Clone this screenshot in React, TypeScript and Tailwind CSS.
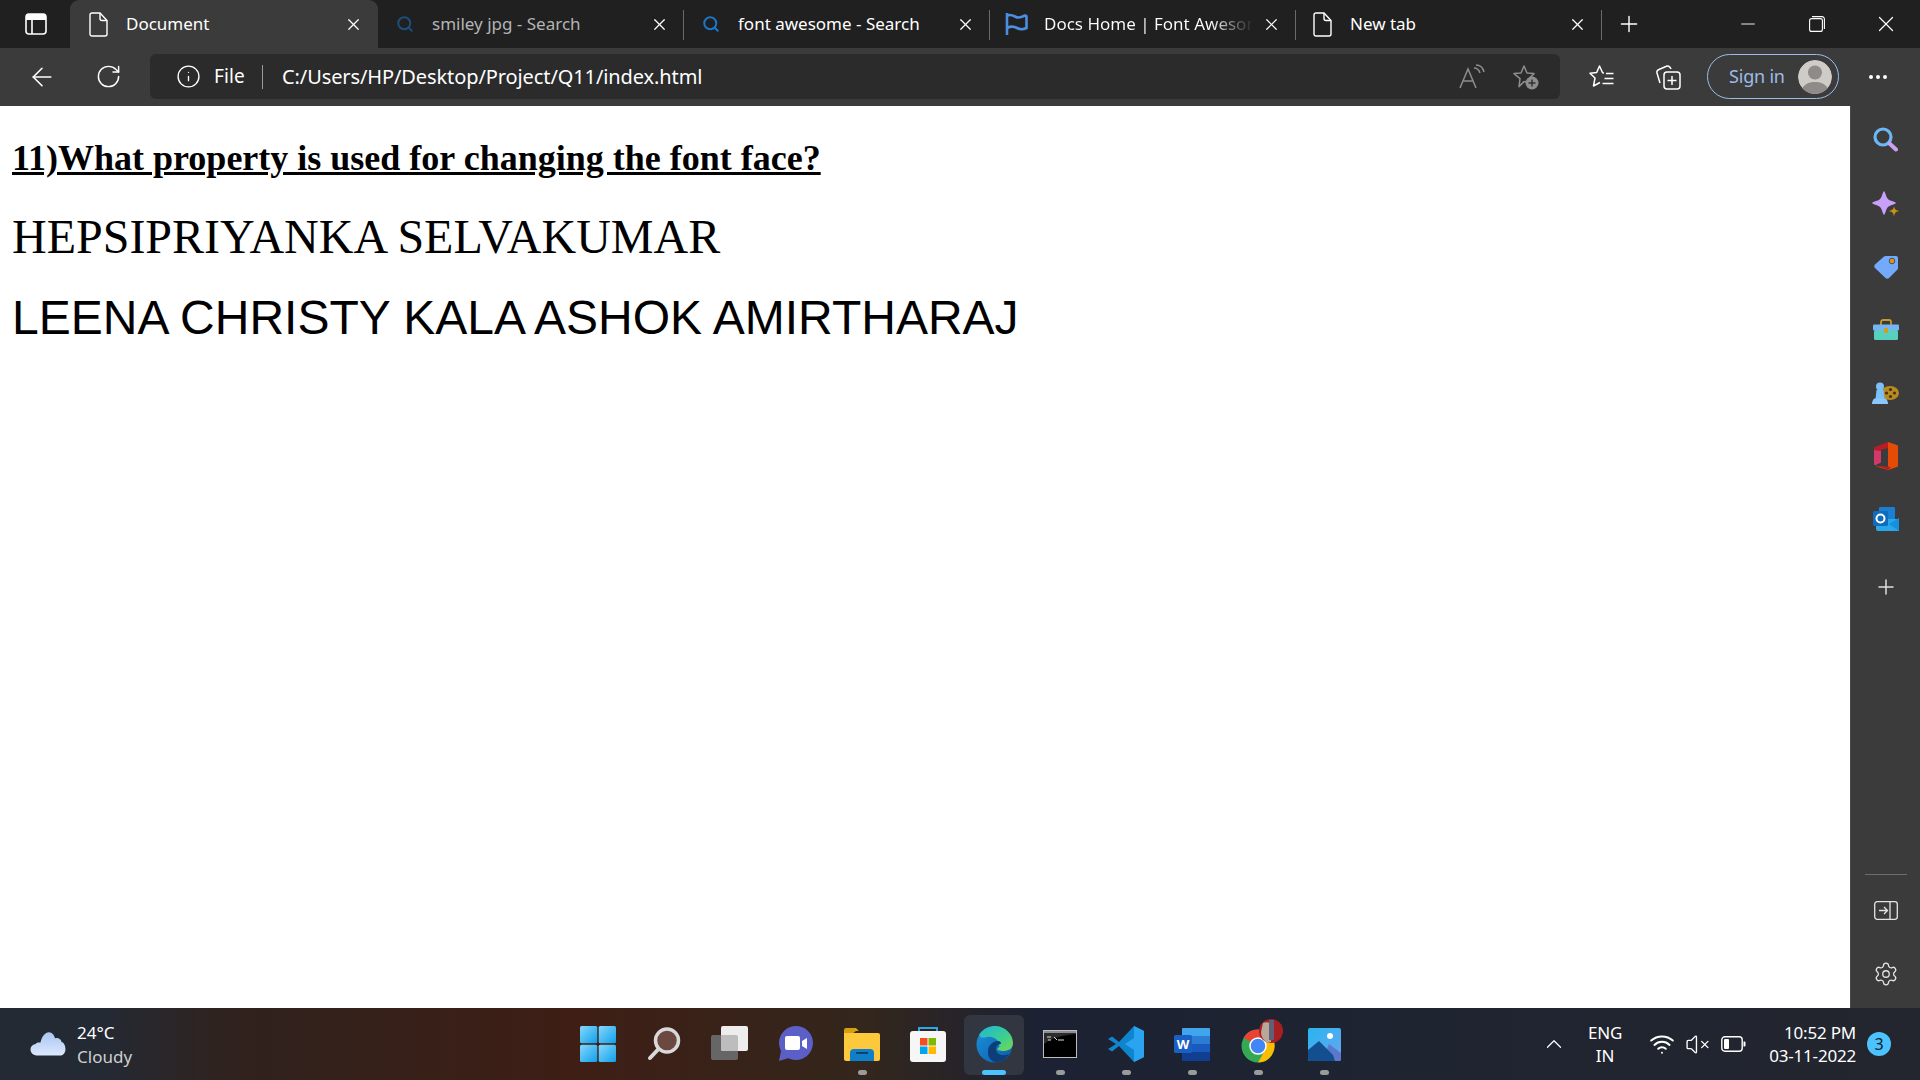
import { ArrowLeft, ChevronUp, Info, Minus, MoreHorizontal, Plus, RotateCw, Search, Settings, VolumeX, Wifi, X } from 'lucide-react'
import type { ReactNode } from 'react'

const uiFont = "font-['Noto_Sans','Open_Sans',sans-serif]"

const FileIcon = () => (
  <svg width="20" height="25" viewBox="0 0 20 25" fill="none" stroke="#fff" strokeWidth="1.4">
    <path d="M3 1h8l7 7.5V22a2 2 0 0 1-2 2H3a2 2 0 0 1-2-2V3a2 2 0 0 1 2-2z" />
    <path d="M11 1v5.5a2 2 0 0 0 2 2h5" />
  </svg>
)

const FlagIcon = () => (
  <svg width="24" height="24" viewBox="0 0 24 24" fill="none" stroke="#4a90e2" strokeWidth="2.600">
    <path d="M2 1v22" />
    <path d="M2 3.500c4-1.500 6 0 9 1.500s6 0 9-1.500c1 0 1.500.500 1.500 1.500v11c-3 1.500-6 2-9.500 0-3.500-2-6-2-10 0" />
  </svg>
)

const Tab = ({ icon, label, active, dim, fade, divider }: { icon: ReactNode; label: string; active?: boolean; dim?: boolean; fade?: boolean; divider?: boolean }) => (
  <div className={`relative flex items-center h-[48px] ${active ? 'bg-[#3b3b3b] rounded-t-[9px] -ml-[2px] pl-[2px] w-[308px]' : 'w-[306px]'}`}>
    <div className="w-[54px] flex justify-center">{icon}</div>
    <span
      className={`w-[208px] overflow-hidden whitespace-nowrap text-[17px] ${fade ? 'bg-gradient-to-r from-white from-80% to-[#2a2a2a] bg-clip-text text-transparent' : dim ? 'text-[#b4b4b4]' : 'text-white'}`}
    >
      {label}
    </span>
    <div className="w-[38px] flex justify-center">
      <X size={19} strokeWidth={1.5} color="#fff" />
    </div>
    {divider && <div className="absolute right-0 top-[10px] h-[30px] w-[1px] bg-[#6a6a6a]" />}
  </div>
)

const ReadAloud = () => (
  <svg width="26" height="26" viewBox="0 0 26 26" fill="none" stroke="#8d8d8d" strokeWidth="1.5">
    <path d="M1 24L9 5l8 19M4 17h10" />
    <path d="M15 4c3 0 5 2 6 5M17 1c4 0 7 3 8 7" />
  </svg>
)

const FavAdd = () => (
  <svg width="28" height="26" viewBox="0 0 28 26" fill="none">
    <path d="M12 2l3 7 7 .6-5 5 1 4-6-1-5 5 1-8-6-5 7-.6z" stroke="#8d8d8d" strokeWidth="1.5" strokeLinejoin="round" />
    <circle cx="20" cy="19" r="6.5" fill="#8d8d8d" />
    <path d="M20 15.5v7M16.5 19h7" stroke="#333" strokeWidth="1.5" />
  </svg>
)

const Favorites = () => (
  <svg width="26" height="26" viewBox="0 0 26 26" fill="none" stroke="#fff" strokeWidth="1.5">
    <path d="M15 9l-1.400-.200L10.500 2 7.700 8.500 1 9.300l5 4.700-1.500 8 6.500-3.500" strokeLinejoin="round" />
    <path d="M17 9.500h7.500M15.500 14.500h9M13.500 19.500h11" />
  </svg>
)

const Collections = () => (
  <svg width="26" height="26" viewBox="0 0 26 26" fill="none" stroke="#fff" strokeWidth="1.5">
    <path d="M5 19L2 9c-.500-2 .500-3 2-3.500L12 2c2-.500 3 .500 4 3" />
    <rect x="9" y="8" width="16" height="17" rx="3" />
    <path d="M17 12v9M12.500 16.500h9" />
  </svg>
)

const Avatar = () => (
  <svg width="34" height="34" viewBox="0 0 34 34" className="rounded-full">
    <circle cx="17" cy="17" r="17" fill="#cfccc8" />
    <circle cx="17" cy="12.500" r="7" fill="#8e8b88" />
    <path d="M3 31c3-8 9-9 14-9s11 1 14 9c-3 2-8 3-14 3s-11-1-14-3z" fill="#8e8b88" />
  </svg>
)

const SideSearch = () => (
  <svg width="25" height="25" viewBox="0 0 25 25" fill="none" className="-mt-[2px]">
    <circle cx="10" cy="10" r="8" stroke="#6cb8f6" strokeWidth="3.200" />
    <path d="M16.500 16.500l6.500 6" stroke="#c9a1ee" strokeWidth="4" strokeLinecap="round" />
  </svg>
)

const SideSparkle = () => (
  <svg width="27" height="26" viewBox="0 0 27 26">
    <path d="M12 0c1 1 1.600 3 2.400 5.400.800 2.400 2.400 3.600 4.800 4.400 2 .700 3.800 1.200 4.800 2.200-1 1-2.800 1.500-4.800 2.200-2.400.800-4 2-4.800 4.400-.800 2.400-1.400 4.400-2.400 5.400-1-1-1.600-3-2.400-5.400-.800-2.400-2.400-3.600-4.800-4.400C2.800 13.500 1 13 0 12c1-1 2.800-1.500 4.800-2.200 2.400-.800 4-2 4.800-4.400C10.400 3 11 1 12 0z" fill="#c9a0f8" />
    <path d="M22 15c.500 3 1 3.900 5 5-4 1.100-4.500 2-5 6-.500-4-1-4.900-5-6 4-1.100 4.500-2 5-5z" fill="#c8930e" />
  </svg>
)

const SideTag = () => (
  <svg width="26" height="26" viewBox="0 0 26 26">
    <path d="M13 2h10a2 2 0 0 1 2 2v10c0 1-.300 1.500-1 2l-8 8c-1 1-2.500 1-3.500 0L2 14c-1-1-1-2.500 0-3.500l9-8c.500-.300 1-.500 2-.500z" fill="#74aafc" />
    <circle cx="19" cy="7" r="2.800" fill="#e8920c" stroke="#24405f" strokeWidth=".8" />
  </svg>
)

const SideToolbox = () => (
  <svg width="26" height="22" viewBox="0 0 26 22">
    <path d="M8 6V3a2 2 0 0 1 2-2h6a2 2 0 0 1 2 2v3" fill="none" stroke="#c8962e" strokeWidth="1.800" />
    <rect x="1" y="11" width="24" height="10" rx="1.500" fill="#58d0be" />
    <rect x="0" y="5.500" width="26" height="6" rx="1" fill="#75b6f2" />
    <rect x="11" y="9" width="4" height="5" rx="1" fill="#d99a1e" />
  </svg>
)

const SideGames = () => (
  <svg width="27" height="22" viewBox="0 0 27 22">
    <ellipse cx="18" cy="11" rx="9" ry="7" fill="#b88a22" />
    <circle cx="14.500" cy="11" r="1.600" fill="#4a3208" />
    <circle cx="18.500" cy="7.500" r="1.600" fill="#4a3208" />
    <circle cx="18.500" cy="14.500" r="1.600" fill="#4a3208" />
    <circle cx="22.500" cy="11" r="1.600" fill="#4a3208" />
    <circle cx="8" cy="4.500" r="4" fill="#7cc0fa" />
    <path d="M4.500 8h7l1 9h-9z" fill="#7cc0fa" />
    <path d="M0 22c0-3 1.500-5.500 3-5.500h10c1.500 0 3 2.500 3 5.500z" fill="#8ac8fb" />
  </svg>
)

const SideOffice = () => (
  <svg width="24" height="28" viewBox="0 0 24 28">
    <path d="M14 0l9 3c.600.200 1 .700 1 1.300v19.400c0 .600-.400 1.100-1 1.300l-9 3-13-4 13 1.500z" fill="#e64a07" />
    <path d="M14 0L1.500 4.700C.600 5 0 5.800 0 6.700v14.800l7-2.500V8l7-2z" fill="#b81d24" />
    <path d="M0 8v14c0 1 1 1.500 2 1l5-2.500V9z" fill="#d3386a" />
    <path d="M4 24l10 4 3-3-9-1z" fill="#b81d24" />
  </svg>
)

const SideOutlook = () => (
  <svg width="26" height="26" viewBox="0 0 26 26">
    <rect x="6" y="1" width="16" height="14" rx="1" fill="#1a7fd0" />
    <path d="M3 13h23v12H5a2 2 0 0 1-2-2z" fill="#28a8ea" />
    <path d="M16 18l10-6v13z" fill="#1490df" />
    <rect x="0" y="5" width="15" height="15" rx="1.500" fill="#0f6cbd" />
    <circle cx="7.500" cy="12.500" r="4" fill="none" stroke="#fff" strokeWidth="2" />
  </svg>
)

const PanelIcon = () => (
  <svg width="24" height="19" viewBox="0 0 24 19" fill="none" stroke="#e4e4e4" strokeWidth="1.300">
    <rect x=".7" y=".7" width="22.600" height="17.600" rx="2.500" />
    <path d="M16 1v17M5 9.500h8M10 6l3.500 3.500L10 13" />
  </svg>
)

const Cloud = () => (
  <svg width="36" height="24" viewBox="0 0 36 24">
    <defs>
      <linearGradient id="cloud" x1="0" y1="0" x2="0" y2="1">
        <stop offset="0" stopColor="#a9c6f4" />
        <stop offset="1" stopColor="#dce8fb" />
      </linearGradient>
    </defs>
    <path d="M8 23.500c-9 0-10-10-2.500-11.500C7 10 9 10.500 10.500 10.500 12 4 16-.500 20 .500c3 .500 4.500 3.500 5 6 1-1 6-.500 6.500 3.500 5 1 6 13.500-1.500 13.500z" fill="url(#cloud)" />
  </svg>
)

const WindowsLogo = () => (
  <svg width="36" height="36" viewBox="0 0 36 36">
    <defs>
      <linearGradient id="win" x1="0" y1="0" x2="1" y2="1">
        <stop offset="0" stopColor="#86d8fb" />
        <stop offset="1" stopColor="#109fea" />
      </linearGradient>
    </defs>
    <rect x="0" y="0" width="17.300" height="17.300" rx="1.500" fill="url(#win)" />
    <rect x="18.700" y="0" width="17.300" height="17.300" rx="1.500" fill="url(#win)" />
    <rect x="0" y="18.700" width="17.300" height="17.300" rx="1.500" fill="url(#win)" />
    <rect x="18.700" y="18.700" width="17.300" height="17.300" rx="1.500" fill="url(#win)" />
  </svg>
)

const SearchGlass = () => (
  <svg width="34" height="34" viewBox="0 0 34 34" fill="none">
    <circle cx="20" cy="13.500" r="11.500" fill="#6b4840" stroke="#d9d9d9" strokeWidth="3.500" />
    <path d="M11.500 22L3 31" stroke="#d9d9d9" strokeWidth="4" strokeLinecap="round" />
  </svg>
)

const TaskView = () => (
  <svg width="38" height="36" viewBox="0 0 38 36">
    <rect x="0" y="9" width="27" height="25" rx="2" fill="#666" />
    <rect x="10" y="0" width="27" height="25" rx="2" fill="#ededed" />
    <path d="M10 9h15a2 2 0 0 1 2 2v14H12a2 2 0 0 1-2-2z" fill="#bdbdbd" />
  </svg>
)

const Chat = () => (
  <svg width="36" height="36" viewBox="0 0 36 36">
    <circle cx="18" cy="17" r="17" fill="#5b5fc7" />
    <path d="M3 25l-2 10 10-3z" fill="#5b5fc7" />
    <rect x="7" y="10" width="15" height="14" rx="2" fill="#fff" />
    <path d="M24 15l5-3v11l-5-3z" fill="#fff" />
  </svg>
)

const Explorer = () => (
  <svg width="36" height="34" viewBox="0 0 36 34">
    <path d="M0 3a2 2 0 0 1 2-2h10l3 3h-3l-4 3H0z" fill="#d79f0e" />
    <path d="M0 6h34a2 2 0 0 1 2 2v24a2 2 0 0 1-2 2H2a2 2 0 0 1-2-2z" fill="#fcc83c" />
    <path d="M6 34V26a4 4 0 0 1 4-4h16a4 4 0 0 1 4 4v8z" fill="#0f7fc9" />
    <rect x="12" y="25" width="12" height="1.800" fill="#063e68" />
  </svg>
)

const Store = () => (
  <svg width="36" height="36" viewBox="0 0 36 36">
    <path d="M9 9V2h18v7" fill="none" stroke="#2ba6e8" strokeWidth="2" />
    <path d="M0 8a3 3 0 0 1 3-3h30a3 3 0 0 1 3 3v25a3 3 0 0 1-3 3H3a3 3 0 0 1-3-3z" fill="#f6f6f6" />
    <rect x="10" y="12" width="7.500" height="7.500" fill="#f25022" />
    <rect x="18.500" y="12" width="7.500" height="7.500" fill="#7fba00" />
    <rect x="10" y="20.500" width="7.500" height="7.500" fill="#00a4ef" />
    <rect x="18.500" y="20.500" width="7.500" height="7.500" fill="#ffb900" />
  </svg>
)

const Edge = () => (
  <svg width="37" height="37" viewBox="0 0 37 37">
    <defs>
      <linearGradient id="edgeA" x1="0" y1="0" x2="1" y2="1">
        <stop offset="0" stopColor="#1fb5d8" />
        <stop offset=".6" stopColor="#3ed08c" />
        <stop offset="1" stopColor="#7ad650" />
      </linearGradient>
      <linearGradient id="edgeB" x1="0" y1="0" x2="1" y2="1">
        <stop offset="0" stopColor="#1b93dd" />
        <stop offset="1" stopColor="#0c5aa8" />
      </linearGradient>
    </defs>
    <circle cx="18.500" cy="18.500" r="18" fill="url(#edgeB)" />
    <path d="M3 9C7 2 14 0 19 0c10 0 18 8 18 17 0 6-5 8-10 8-3 0-6-1-6-2 2-1 3-3 2-6-2-5-8-7-12-6-3 .500-6 2-8-2z" fill="url(#edgeA)" />
    <path d="M22 36c-6 1-10-4-10-10 0-7 5-11 10-11 2 0 3 1 3 3-3 0-5 2-5 5 0 5 6 8 13 5-2 4-6 7-11 8z" fill="#0e3d78" />
  </svg>
)

const Terminal = () => (
  <svg width="34" height="28" viewBox="0 0 34 28">
    <rect x=".5" y=".5" width="33" height="27" fill="#000" stroke="#bdbdbd" />
    <rect x="1" y="1" width="32" height="2" fill="#8d8d8d" />
    <path d="M1 14C8 8 20 5 33 4V3H1z" fill="#2c2c2c" />
    <path d="M4 7h4M5 10h3M11 7l3 3M15 10h6" stroke="#ddd" strokeWidth="1" />
  </svg>
)

const VsCode = () => (
  <svg width="36" height="36" viewBox="0 0 36 36">
    <path d="M26 0l10 5v26l-10 5L11 20l-7 5.500L0 23l8-5-8-5 4-2.500 7 5.500z" fill="#0f85cf" />
    <path d="M26 0l10 5v26l-10 5V24l-9-6 9-6z" fill="#2aa4f0" />
  </svg>
)

const Word = () => (
  <svg width="36" height="33" viewBox="0 0 36 33">
    <rect x="8" y="0" width="28" height="9" rx="1" fill="#41a5ee" />
    <rect x="8" y="8" width="28" height="9" fill="#2b7cd3" />
    <rect x="8" y="16" width="28" height="9" fill="#185abd" />
    <rect x="8" y="24" width="28" height="9" rx="1" fill="#103f91" />
    <rect x="0" y="7" width="18" height="18" rx="1.500" fill="#1a5fc4" />
    <text x="9" y="21" textAnchor="middle" fontFamily="'Open Sans', sans-serif" fontWeight="700" fontSize="13" fill="#fff">W</text>
  </svg>
)

const Chrome = () => (
  <svg width="44" height="44" viewBox="0 0 44 44" className="overflow-visible">
    <circle cx="22" cy="24" r="16.500" fill="#34a853" />
    <path d="M22 7.500a16.500 16.500 0 0 1 14.300 8.250H22a8.250 8.250 0 0 0-7.150 4.100L7.700 15.750A16.500 16.500 0 0 1 22 7.500z" fill="#ea4335" />
    <path d="M36.300 15.750A16.500 16.500 0 0 1 22 40.500l7.150-12.400a8.250 8.250 0 0 0 0-8.250z" fill="#fbbc04" />
    <circle cx="22" cy="24" r="8" fill="#4285f4" stroke="#fff" strokeWidth="1.500" />
    <circle cx="35" cy="9" r="12" fill="#a81f22" />
    <path d="M27 1c5-2 8 .500 8 4v15l-4 1c-4-3-6-7-6-11z" fill="#b9a89a" />
    <path d="M33 -2h5v20h-5z" fill="#5f5f78" />
  </svg>
)

const Photos = () => (
  <svg width="33" height="33" viewBox="0 0 33 33">
    <defs>
      <linearGradient id="sky" x1="0" y1="0" x2="1" y2="1">
        <stop offset="0" stopColor="#28b5ee" />
        <stop offset="1" stopColor="#6aa5f0" />
      </linearGradient>
    </defs>
    <rect width="33" height="33" rx="2" fill="url(#sky)" />
    <circle cx="22" cy="8" r="3" fill="#fff" />
    <path d="M14 33l7-17 12 9v6a2 2 0 0 1-2 2z" fill="#5b79cc" />
    <path d="M0 22l11-9 14 14 2 6H2a2 2 0 0 1-2-2z" fill="#134e91" />
  </svg>
)

const Battery = () => (
  <svg width="25" height="16" viewBox="0 0 25 16" fill="none">
    <rect x=".8" y=".8" width="20.400" height="14.400" rx="3" stroke="#fff" strokeWidth="1.400" />
    <rect x="3" y="3" width="5" height="10" rx="1" fill="#fff" />
    <path d="M22.500 5.500h1a1 1 0 0 1 1 1v3a1 1 0 0 1-1 1h-1z" fill="#fff" />
  </svg>
)

const sideIcons = [<SideSearch />, <SideSparkle />, <SideTag />, <SideToolbox />, <SideGames />, <SideOffice />, <SideOutlook />]

const dockIcons = [
  { icon: <WindowsLogo /> },
  { icon: <SearchGlass /> },
  { icon: <TaskView /> },
  { icon: <Chat /> },
  { icon: <Explorer />, open: true },
  { icon: <Store /> },
  { icon: <Edge />, active: true },
  { icon: <Terminal />, open: true },
  { icon: <VsCode />, open: true },
  { icon: <Word />, open: true },
  { icon: <Chrome />, open: true },
  { icon: <Photos />, open: true },
]

const App = () => {
  return (
    <div className={`w-[1920px] h-[1080px] flex flex-col overflow-hidden bg-white ${uiFont}`}>
      {/* title bar */}
      <div className="h-[48px] flex items-center bg-[#202020] text-white">
        <div className="w-[72px] flex justify-center">
          <svg width="22" height="22" viewBox="0 0 22 22" fill="none">
            <rect x="1" y="1" width="20" height="20" rx="3" stroke="#fff" strokeWidth="1.600" />
            <path d="M1 7V4a3 3 0 0 1 3-3h14a3 3 0 0 1 3 3v3z" fill="#fff" />
            <path d="M7 7v14" stroke="#fff" strokeWidth="1.600" />
          </svg>
        </div>
        <Tab active icon={<FileIcon />} label="Document" />
        <Tab dim divider icon={<Search size={18} strokeWidth={2.600} color="#1d4f7c" />} label="smiley jpg - Search" />
        <Tab divider icon={<Search size={18} strokeWidth={2.600} color="#1b78c8" />} label="font awesome - Search" />
        <Tab divider fade icon={<FlagIcon />} label="Docs Home | Font Awesome" />
        <Tab divider icon={<FileIcon />} label="New tab" />
        <div className="w-[54px] flex justify-center">
          <Plus size={26} strokeWidth={1.300} />
        </div>
        <div className="ml-auto flex items-center">
          <div className="w-[69px] flex justify-center"><Minus size={22} strokeWidth={1} /></div>
          <div className="w-[69px] flex justify-center">
            <svg width="16" height="16" viewBox="0 0 16 16" fill="none" stroke="#fff" strokeWidth="1.100">
              <rect x=".6" y="2.600" width="12.800" height="12.800" rx="2" />
              <path d="M3 .6h10a2.400 2.400 0 0 1 2.400 2.400v10" />
            </svg>
          </div>
          <div className="w-[69px] flex justify-center"><X size={26} strokeWidth={1.100} /></div>
        </div>
      </div>

      {/* toolbar */}
      <div className="h-[58px] flex items-center pb-[1px] pl-[9px] bg-[#3b3b3b] text-white">
        <div className="w-[66px] flex justify-center"><ArrowLeft size={30} strokeWidth={1.300} /></div>
        <div className="w-[66px] flex justify-center"><RotateCw size={27} strokeWidth={1.300} /></div>
        <div className="ml-[9px] w-[1410px] h-[45px] flex items-center rounded-[6px] bg-[#2b2b2b] pl-[26px] pr-[7px]">
          <Info size={25} strokeWidth={1.300} />
          <span className="ml-[13px] w-[48px] text-[19px] tracking-[0.1px]">File</span>
          <div className="h-[24px] w-[1px] bg-[#9a9a9a]" />
          <span className="ml-[19px] text-[20px] tracking-[-0.1px]">C:/Users/HP/Desktop/Project/Q11/index.html</span>
          <div className="ml-auto w-[54px] flex justify-center"><ReadAloud /></div>
          <div className="w-[54px] flex justify-center"><FavAdd /></div>
        </div>
        <div className="ml-[9px] w-[66px] flex justify-center"><Favorites /></div>
        <div className="w-[66px] flex justify-center"><Collections /></div>
        <div className="ml-[6px] w-[132px] h-[45px] flex items-center justify-between rounded-full border-[1.5px] border-[#9dbbe8] pl-[21px] pr-[6px]">
          <span className="text-[18px] tracking-[-0.2px] text-[#9dbbe8]">Sign in</span>
          <Avatar />
        </div>
        <div className="w-[78px] flex justify-center"><MoreHorizontal size={24} strokeWidth={2} /></div>
      </div>

      {/* page + sidebar */}
      <div className="flex-1 flex min-h-0">
        <div className="flex-1 px-[12px] text-black">
          <h1 className="mt-[32px] font-['Liberation_Serif',serif] text-[36px] leading-[41px] font-bold underline">11)What property is used for changing the font face?</h1>
          <p className="mt-[30px] font-['Liberation_Serif',serif] text-[48px] leading-[55px]">HEPSIPRIYANKA SELVAKUMAR</p>
          <p className="mt-[26px] font-['Liberation_Sans',sans-serif] text-[48px] leading-[55px]">LEENA CHRISTY KALA ASHOK AMIRTHARAJ</p>
        </div>
        <div className="w-[70px] flex flex-col items-center bg-[#3b3b3b] border-l border-[#4a4a4a] pt-[3px] pb-[3px]">
          {sideIcons.map((icon, i) => (
            <div key={i} className="h-[63px] flex items-center justify-center">{icon}</div>
          ))}
          <div className="mt-[5px] h-[63px] flex items-center justify-center">
            <Plus size={24} strokeWidth={1.500} color="#e0e0e0" />
          </div>
          <div className="mt-auto mb-[4px] w-[42px] h-[1px] bg-[#6e6e6e]" />
          <div className="h-[63px] flex items-center justify-center"><PanelIcon /></div>
          <div className="h-[63px] flex items-center justify-center"><Settings size={26} strokeWidth={1.200} color="#e4e4e4" /></div>
        </div>
      </div>

      {/* taskbar */}
      <div className="h-[72px] flex items-center text-white bg-[linear-gradient(90deg,#232a34_0%,#232a34_5%,#30221e_12%,#3e1e15_30%,#33261c_45%,#1c2233_54%,#23262e_100%)]">
        <div className="w-[565px] flex items-center pl-[30px]">
          <Cloud />
          <div className="ml-[11px] mt-[2px] flex flex-col text-[17px] leading-[24px]">
            <span>24°C</span>
            <span className="text-[#cfcfcf]">Cloudy</span>
          </div>
        </div>
        <div className="flex">
          {dockIcons.map((d, i) => (
            <div key={i} className="relative w-[66px] h-[72px] flex items-center justify-center">
              {d.active && <div className="absolute left-[3px] top-[7px] w-[60px] h-[60px] rounded-[6px] bg-[#313640]" />}
              <div className="relative">{d.icon}</div>
              {d.open && <div className="absolute left-[29px] bottom-[5px] w-[9px] h-[5px] rounded-full bg-[#9b9b9b]" />}
              {d.active && <div className="absolute left-[21px] bottom-[5px] w-[24px] h-[5px] rounded-full bg-[#4cc2ff]" />}
            </div>
          ))}
        </div>
        <div className="ml-[183px] w-[28px] flex justify-center"><ChevronUp size={26} strokeWidth={1.100} /></div>
        <div className="ml-[7px] w-[60px] flex flex-col items-center text-[17px] leading-[23px] tracking-[-0.2px]">
          <span>ENG</span>
          <span>IN</span>
        </div>
        <div className="ml-[10px] w-[34px] flex justify-center"><Wifi size={26} strokeWidth={1.800} /></div>
        <div className="ml-[1px] w-[34px] flex justify-center"><VolumeX size={25} strokeWidth={1.300} /></div>
        <div className="ml-[2px] w-[34px] flex justify-center"><Battery /></div>
        <div className="w-[106px] flex flex-col items-end text-[17px] leading-[23px] tracking-[-0.2px]">
          <span>10:52 PM</span>
          <span>03-11-2022</span>
        </div>
        <div className="ml-[11px] w-[24px] h-[24px] flex items-center justify-center rounded-full bg-[#4cc2ff] text-[16px] text-[#10202c]">3</div>
      </div>
    </div>
  )
}

export default App
